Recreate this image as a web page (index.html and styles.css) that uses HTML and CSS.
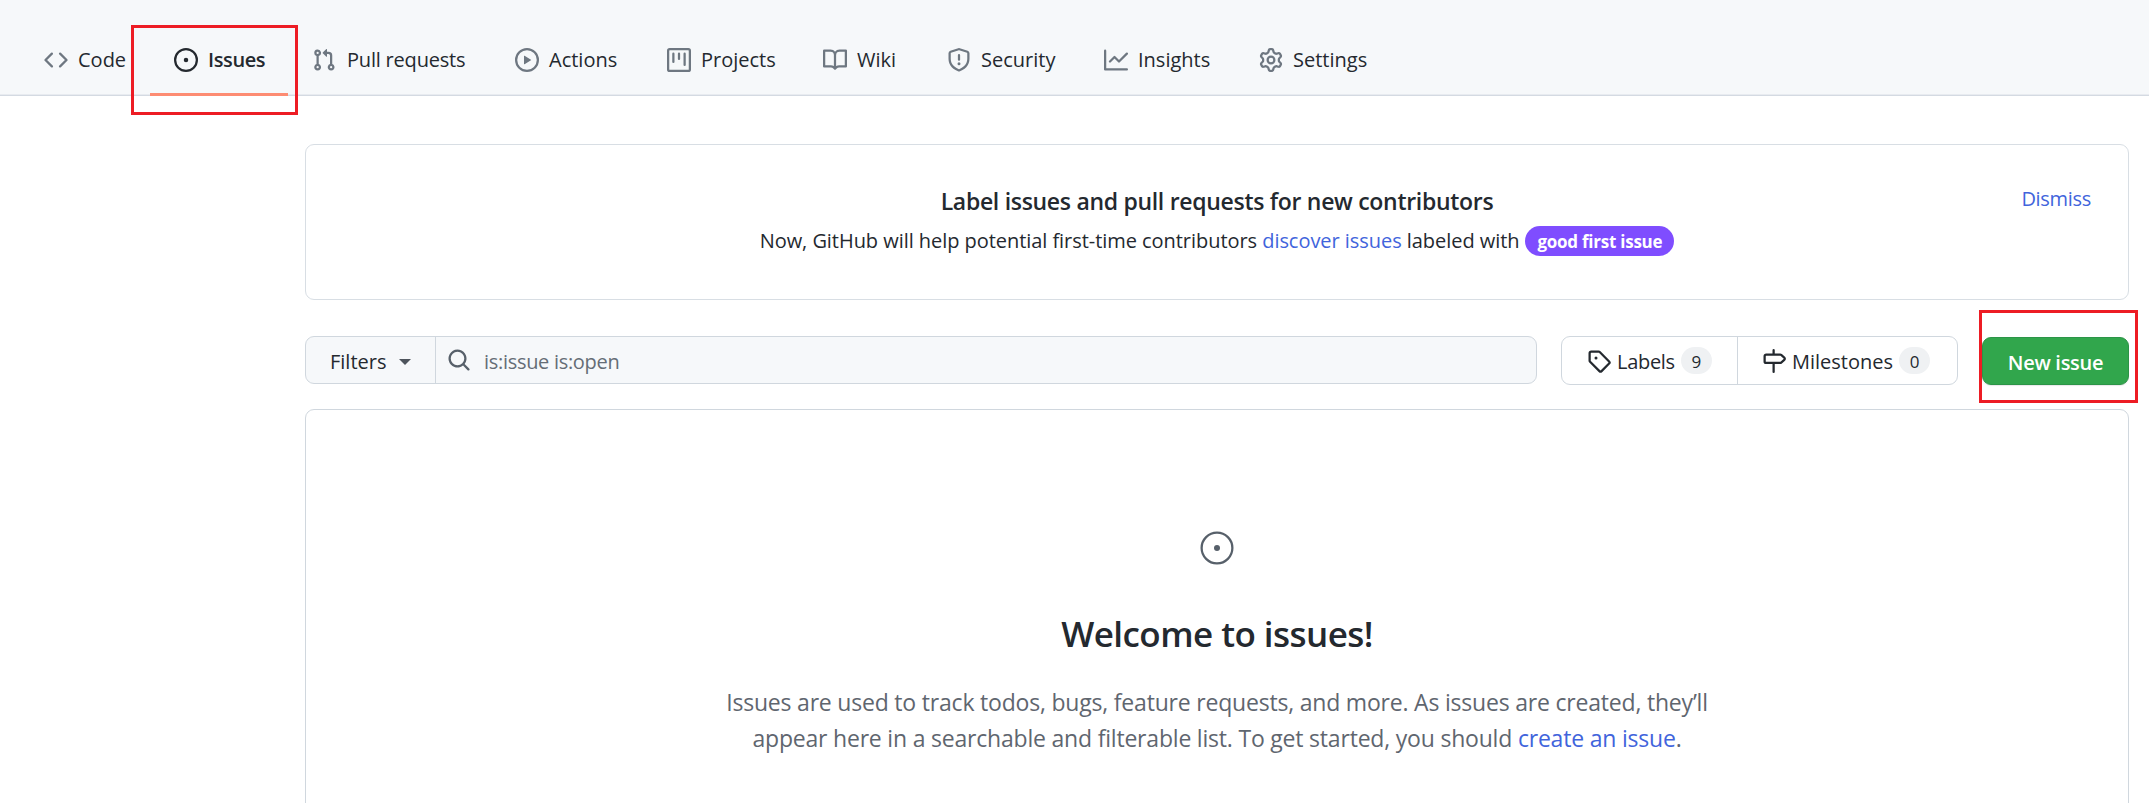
FILE: index.html
```html
<!DOCTYPE html>
<html lang="en">
<head>
<meta charset="utf-8">
<title>Issues</title>
<link rel="stylesheet" href="styles.css">
</head>
<body>
<nav class="nav">
  <a class="tab"><svg class="icon" viewBox="0 0 16 16"><path d="M4.72 3.22a.75.75 0 011.06 1.06L2.06 8l3.72 3.72a.75.75 0 11-1.06 1.06L.47 8.53a.75.75 0 010-1.06l4.25-4.25zm6.56 0a.75.75 0 10-1.06 1.06L13.94 8l-3.72 3.72a.75.75 0 101.06 1.06l4.25-4.25a.75.75 0 000-1.06l-4.25-4.25z"/></svg><span>Code</span></a>
  <a class="tab tab-active"><svg class="icon" viewBox="0 0 16 16"><circle class="line" cx="8" cy="8" r="7.25"/><circle cx="8" cy="8" r="1.5"/></svg><span>Issues</span></a>
  <a class="tab tab-pulls"><svg class="icon" viewBox="0 0 16 16"><path fill-rule="evenodd" d="M7.177 3.073L9.573.677A.25.25 0 0110 .854v4.792a.25.25 0 01-.427.177L7.177 3.427a.25.25 0 010-.354zM3.75 2.5a.75.75 0 100 1.5.75.75 0 000-1.5zm-2.25.75a2.25 2.25 0 113 2.122v5.256a2.251 2.251 0 11-1.5 0V5.372A2.25 2.25 0 011.5 3.25zM11 2.5h-1V4h1a1 1 0 011 1v5.628a2.251 2.251 0 101.5 0V5A2.5 2.5 0 0011 2.5zm1 10.25a.75.75 0 111.5 0 .75.75 0 01-1.5 0zM3.75 12a.75.75 0 100 1.5.75.75 0 000-1.5z"/></svg><span>Pull requests</span></a>
  <a class="tab"><svg class="icon" viewBox="0 0 16 16"><circle class="line" cx="8" cy="8" r="7.25"/><path d="M6.379 5.227A.25.25 0 006 5.442v5.117a.25.25 0 00.379.214l4.264-2.559a.25.25 0 000-.428L6.379 5.227z"/></svg><span>Actions</span></a>
  <a class="tab"><svg class="icon" viewBox="0 0 16 16"><rect class="line" x=".75" y=".75" width="14.5" height="14.5" rx="1"/><path class="line" stroke-linecap="round" d="M4.25 3.75v5.5M8 3.75v3.5M11.75 3.75v7.5"/></svg><span>Projects</span></a>
  <a class="tab"><svg class="icon" viewBox="0 0 16 16"><path fill-rule="evenodd" d="M0 1.75A.75.75 0 01.75 1h4.253c1.227 0 2.317.59 3 1.501A3.744 3.744 0 0111.006 1h4.245a.75.75 0 01.75.75v10.5a.75.75 0 01-.75.75h-4.507a2.25 2.25 0 00-1.591.659l-.622.621a.75.75 0 01-1.06 0l-.622-.621A2.25 2.25 0 005.258 13H.75a.75.75 0 01-.75-.75V1.75zm8.755 3a2.25 2.25 0 012.25-2.25H14.5v9h-3.757c-.71 0-1.4.201-1.992.572l.004-7.322zm-1.504 7.324l.004-5.073-.002-2.253A2.25 2.25 0 005.003 2.5H1.5v9h3.757a3.75 3.75 0 011.994.574z"/></svg><span>Wiki</span></a>
  <a class="tab"><svg class="icon" viewBox="0 0 16 16"><path fill-rule="evenodd" d="M7.467.133a1.75 1.75 0 011.066 0l5.25 1.68A1.75 1.75 0 0115 3.48V7c0 1.566-.32 3.182-1.303 4.682-.983 1.498-2.585 2.813-5.032 3.855a1.7 1.7 0 01-1.33 0c-2.447-1.042-4.049-2.357-5.032-3.855C1.32 10.182 1 8.566 1 7V3.48a1.75 1.75 0 011.217-1.667l5.25-1.68zm.61 1.429a.25.25 0 00-.153 0l-5.25 1.68a.25.25 0 00-.174.238V7c0 1.358.275 2.666 1.057 3.86.784 1.194 2.121 2.34 4.366 3.297a.2.2 0 00.154 0c2.245-.956 3.582-2.104 4.366-3.298C13.225 9.666 13.5 8.36 13.5 7V3.48a.25.25 0 00-.174-.237l-5.25-1.68zM9 10.5a1 1 0 11-2 0 1 1 0 012 0zm-.25-5.75a.75.75 0 10-1.5 0v3a.75.75 0 001.5 0v-3z"/></svg><span>Security</span></a>
  <a class="tab"><svg class="icon" viewBox="0 0 16 16"><path class="line" stroke-linecap="round" stroke-linejoin="round" d="M.75 1.75v12.5h14.5M4 9l3-3 3 3 5.25-5.25"/></svg><span>Insights</span></a>
  <a class="tab"><svg class="icon" viewBox="0 0 16 16"><path fill-rule="evenodd" d="M8 0a8.2 8.2 0 0 1 .701.031C9.444.095 9.99.645 10.16 1.29l.288 1.107c.018.066.079.158.212.224.231.114.454.243.668.386.123.082.233.09.299.071l1.103-.303c.644-.176 1.392.021 1.82.63.27.385.506.792.704 1.218.315.675.111 1.422-.364 1.891l-.814.806c-.049.048-.098.147-.088.294.016.257.016.515 0 .772-.01.147.038.246.088.294l.814.806c.475.469.679 1.216.364 1.891a7.977 7.977 0 0 1-.704 1.217c-.428.61-1.176.807-1.82.63l-1.102-.302c-.067-.019-.177-.011-.3.071a5.909 5.909 0 0 1-.668.386c-.133.066-.194.158-.211.224l-.29 1.106c-.168.646-.715 1.196-1.458 1.26a8.006 8.006 0 0 1-1.402 0c-.743-.064-1.289-.614-1.458-1.26l-.289-1.106c-.018-.066-.079-.158-.212-.224a5.738 5.738 0 0 1-.668-.386c-.123-.082-.233-.09-.299-.071l-1.103.303c-.644.176-1.392-.021-1.82-.63a8.12 8.12 0 0 1-.704-1.218c-.315-.675-.111-1.422.363-1.891l.815-.806c.05-.048.098-.147.088-.294a6.214 6.214 0 0 1 0-.772c.01-.147-.038-.246-.088-.294l-.815-.806C.635 6.045.431 5.298.746 4.623a7.92 7.92 0 0 1 .704-1.217c.428-.61 1.176-.807 1.82-.63l1.102.302c.067.019.177.011.3-.071.214-.143.437-.272.668-.386.133-.066.194-.158.211-.224l.29-1.106C6.009.645 6.556.095 7.299.03 7.53.01 7.764 0 8 0ZM7.429 1.525c-.036.003-.108.036-.137.146l-.289 1.105c-.147.561-.549.967-.998 1.189-.173.086-.34.183-.5.29-.417.278-.97.423-1.529.27l-1.103-.303c-.109-.03-.175.016-.195.045a6.44 6.44 0 00-.573.99c-.014.031-.021.11.059.19l.815.806c.411.406.562.957.53 1.456a4.587 4.587 0 000 .582c.032.499-.119 1.05-.53 1.456l-.815.806c-.081.08-.073.159-.059.19.162.348.354.679.573.989.02.03.085.076.195.046l1.102-.303c.56-.153 1.113-.008 1.53.27.16.107.327.204.501.29.447.222.85.629.997 1.189l.289 1.105c.029.109.101.143.137.146a6.613 6.613 0 001.142 0c.036-.003.108-.036.137-.146l.289-1.105c.147-.561.549-.967.998-1.189.173-.086.34-.183.5-.29.417-.278.97-.423 1.529-.27l1.103.303c.109.029.175-.016.195-.045.219-.311.411-.642.573-.99.014-.031.021-.11-.059-.19l-.815-.806c-.411-.406-.562-.957-.53-1.456a4.588 4.588 0 000-.582c-.032-.499.119-1.05.53-1.456l.815-.806c.081-.08.073-.159.059-.19a6.464 6.464 0 00-.573-.989c-.02-.03-.085-.076-.195-.046l-1.102.303c-.56.153-1.113.008-1.53-.27a4.44 4.44 0 00-.501-.29c-.447-.222-.85-.629-.997-1.189l-.289-1.105c-.029-.11-.101-.143-.137-.146a6.6 6.6 0 00-1.142 0z"/><circle class="line" cx="8" cy="8" r="2.25"/></svg><span>Settings</span></a>
</nav>

<main class="main">
  <section class="banner">
    <h2 class="banner-title">Label issues and pull requests for new contributors</h2>
    <p class="banner-text"><span>Now, GitHub will help potential first-time contributors <a class="link">discover issues</a> labeled with</span><span class="pill">good first issue</span></p>
    <a class="link dismiss">Dismiss</a>
  </section>

  <div class="toolbar">
    <div class="search">
      <button class="filters">Filters<i class="caret"></i></button>
      <div class="query">
        <svg class="icon" viewBox="0 0 16 16"><path fill-rule="evenodd" d="M11.5 7a4.499 4.499 0 11-8.998 0A4.499 4.499 0 0111.5 7zm-.82 4.74a6 6 0 111.06-1.06l3.04 3.04a.75.75 0 11-1.06 1.06l-3.04-3.04z"/></svg>
        <span class="query-text">is:issue is:open</span>
      </div>
    </div>
    <div class="links">
      <a class="links-item labels"><svg class="icon" viewBox="0 0 16 16"><path fill-rule="evenodd" d="M2.5 7.775V2.75a.25.25 0 01.25-.25h5.025a.25.25 0 01.177.073l6.25 6.25a.25.25 0 010 .354l-5.025 5.025a.25.25 0 01-.354 0l-6.25-6.25a.25.25 0 01-.073-.177zm-1.5 0V2.75C1 1.784 1.784 1 2.75 1h5.025c.464 0 .91.184 1.238.513l6.25 6.25a1.75 1.75 0 010 2.474l-5.026 5.026a1.75 1.75 0 01-2.474 0l-6.25-6.25A1.75 1.75 0 011 7.775zM6 5a1 1 0 100 2 1 1 0 000-2z"/></svg><span class="links-text">Labels</span><span class="counter">9</span></a>
      <a class="links-item milestones"><svg class="icon" viewBox="0 0 16 16"><path fill-rule="evenodd" d="M7.75 0a.75.75 0 01.75.75V3h3.634c.414 0 .814.147 1.13.414l2.07 1.75a1.75 1.75 0 010 2.672l-2.07 1.75a1.75 1.75 0 01-1.13.414H8.5v5.25a.75.75 0 11-1.5 0V10H2.75A1.75 1.75 0 011 8.25v-3.5C1 3.784 1.784 3 2.75 3H7V.75A.75.75 0 017.75 0zm0 8.5h4.384a.25.25 0 00.161-.06l2.07-1.75a.25.25 0 000-.38l-2.07-1.75a.25.25 0 00-.161-.06H2.75a.25.25 0 00-.25.25v3.5c0 .138.112.25.25.25h5z"/></svg><span class="links-text">Milestones</span><span class="counter">0</span></a>
    </div>
    <button class="new-issue">New issue</button>
  </div>

  <section class="blank">
    <svg class="blank-icon" viewBox="0 0 24 24"><circle class="line" cx="12" cy="12" r="10.25"/><circle cx="12" cy="12" r="2"/></svg>
    <h1 class="blank-title">Welcome to issues!</h1>
    <p class="blank-text">Issues are used to track todos, bugs, feature requests, and more. As issues are created, they’ll<br>appear here in a searchable and filterable list. To get started, you should <a class="link">create an issue</a>.</p>
  </section>
</main>

<div class="marker marker-tab"></div>
<div class="marker marker-button"></div>
</body>
</html>
```

FILE: styles.css
```css
* { box-sizing: border-box; }

body {
  margin: 0;
  height: 803px;
  overflow: hidden;
  position: relative;
  background: #fff;
  color: #24292f;
  font-family: "Open Sans", "Noto Sans", sans-serif;
  font-size: 20px;
  letter-spacing: -0.3px;
}

h1, h2, p { margin: 0; }
button { font: inherit; letter-spacing: inherit; color: inherit; }

.icon { width: 24px; height: 24px; flex: none; fill: currentColor; }
.line { fill: none; stroke: currentColor; stroke-width: 1.5; }
.link { color: #4164dc; }

/* Repository tabs */
.nav {
  display: grid;
  grid-template-columns: 130px 138px 203px 152px 156px 124px 157px 155px 160px;
  height: 96px;
  padding: 23px 0 0 20px;
  background: #f6f8fa;
  border-bottom: 1px solid #d4dae2;
  box-shadow: inset 0 -1px #e8ebf0;
  letter-spacing: 0;
}
.tab {
  display: flex;
  align-items: center;
  gap: 10px;
  height: 73px;
  padding-left: 24px;
  line-height: 73px;
  white-space: nowrap;
}
.tab .icon { color: #6e7781; }
.tab-active {
  width: 138px;
  font-weight: 600;
  letter-spacing: -0.4px;
  border-bottom: 3px solid #fd8c73;
  border-top: 3px solid transparent;
}
.tab-active .icon { color: #24292f; }
.tab-pulls { gap: 11px; letter-spacing: -0.2px; }

.main { padding: 48px 20px 0 305px; }

/* Contributor banner */
.banner {
  position: relative;
  height: 156px;
  padding-top: 37px;
  border: 1px solid #d8dee4;
  border-radius: 9px;
  text-align: center;
}
.banner-title { font-size: 23px; font-weight: 600; line-height: 38px; }
.banner-text {
  display: flex;
  justify-content: center;
  align-items: center;
  gap: 6px;
  margin-top: 6px;
  line-height: 30px;
  letter-spacing: -0.05px;
}
.pill {
  height: 30px;
  padding: 0 12px;
  border-radius: 15px;
  background: #7f4dff;
  color: #fff;
  font-size: 17px;
  font-weight: 700;
  line-height: 31px;
  letter-spacing: -0.25px;
}
.dismiss { position: absolute; top: 39px; right: 37px; line-height: 30px; }

/* Search and actions */
.toolbar { display: flex; height: 49px; margin-top: 36px; }
.search {
  display: flex;
  width: 1232px;
  height: 48px;
  border: 1px solid #d0d7de;
  border-radius: 9px;
  background: #f6f8fa;
  overflow: hidden;
}
.filters {
  display: flex;
  align-items: center;
  width: 130px;
  padding: 3px 0 0 24px;
  border: 0;
  border-right: 1px solid #d0d7de;
  background: none;
  font-weight: 500;
  letter-spacing: 0;
  gap: 13px;
}
.caret {
  border: 6px solid transparent;
  border-top-color: #4d545c;
  border-bottom: 0;
}
.query {
  display: flex;
  align-items: center;
  gap: 13px;
  padding-left: 11px;
  color: #656d76;
}
.query .icon { color: #57606a; }
.query-text { padding-top: 2px; }
.links {
  display: flex;
  width: 397px;
  margin-left: 24px;
  border: 1px solid #d0d7de;
  border-radius: 9px;
  font-weight: 500;
}
.links-item { display: flex; align-items: center; padding-left: 25px; }
.labels { width: 176px; border-right: 1px solid #d0d7de; }
.milestones { padding-left: 24px; letter-spacing: 0; }
.links-text { margin-left: 6px; padding-top: 1px; }
.counter {
  width: 31px;
  height: 27px;
  margin-left: 6px;
  border-radius: 14px;
  background: #eff1f3;
  font-size: 17px;
  line-height: 29px;
  text-align: center;
}
.new-issue {
  width: 147px;
  height: 48px;
  margin: 1px 0 0 24px;
  padding: 2px 0 0;
  border: 1px solid #2c9447;
  border-radius: 9px;
  background: #31a64c;
  color: #fff;
  font-weight: 600;
  box-shadow: 0 1px 1px rgba(27, 31, 36, 0.1);
}

/* Empty state */
.blank {
  display: flex;
  flex-direction: column;
  align-items: center;
  height: 420px;
  margin-top: 24px;
  padding-top: 120px;
  border: 1px solid #d0d7de;
  border-radius: 9px 9px 0 0;
  text-align: center;
}
.blank-icon { width: 36px; height: 36px; fill: currentColor; color: #57606a; }
.blank-title { margin-top: 41px; font-size: 35px; font-weight: 600; line-height: 54px; letter-spacing: -0.55px; }
.blank-text {
  margin-top: 23px;
  color: #5f666f;
  font-size: 23px;
  line-height: 36px;
  letter-spacing: -0.2px;
  white-space: nowrap;
}

/* Highlight frames */
.marker { position: absolute; border: 3px solid #ed1c24; }
.marker-tab { left: 131px; top: 25px; width: 167px; height: 90px; }
.marker-button { left: 1979px; top: 310px; width: 159px; height: 93px; }
```
